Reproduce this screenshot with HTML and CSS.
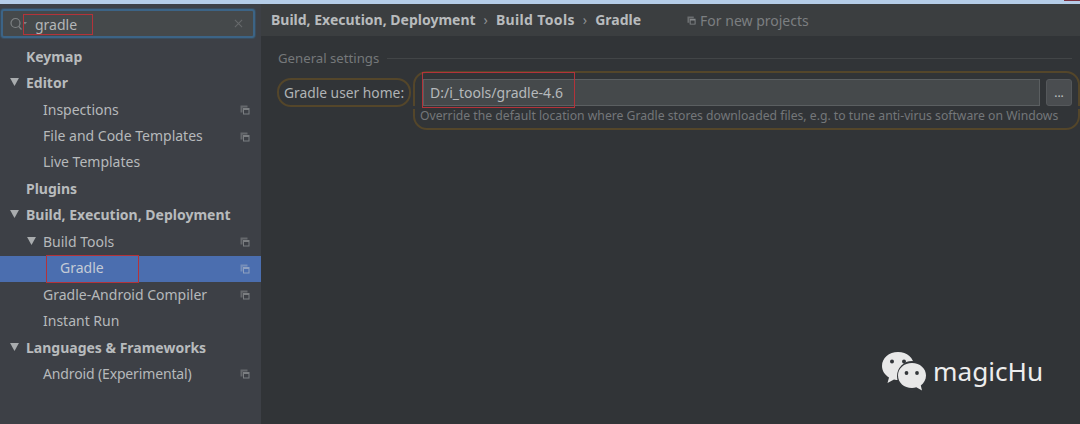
FILE: index.html
```html
<!DOCTYPE html>
<html lang="en">
<head>
<meta charset="utf-8">
<title>Settings</title>
<link rel="stylesheet" href="styles.css">
</head>
<body>
<svg class="defs" width="0" height="0" aria-hidden="true"><defs>
<symbol id="copy" viewBox="0 0 10 10"><path d="M0.5 0.5H7.5V2.5H2.5V7.5H0.5Z" fill="currentColor" opacity=".65"/><path fill-rule="evenodd" d="M3 3H9.5V9.5H3ZM4 5V8.5H8.5V5Z" fill="currentColor"/></symbol>
<symbol id="tri" viewBox="0 0 10 9"><path d="M0 0H10L5 9Z" fill="currentColor"/></symbol>
</defs></svg>
<div class="topstrip"><span class="corner"></span></div>
<div class="app">
  <aside class="sidebar">
    <div class="search">
      <svg class="search-icon" viewBox="0 0 20 14"><circle cx="6.5" cy="6" r="4.5" fill="none" stroke="currentColor" stroke-width="1.2"/><path d="M9.8 9.5L12.5 12.5" stroke="currentColor" stroke-width="1.2"/><path d="M14 5H18L16 7.5Z" fill="currentColor"/></svg>
      <span class="search-text">gradle</span>
      <svg class="search-clear" viewBox="0 0 10 10"><path d="M1 1L9 9M9 1L1 9" stroke="currentColor" stroke-width="1.2"/></svg>
    </div>
    <nav class="tree">
      <div class="row lvl0"><span class="label bold">Keymap</span></div>
      <div class="row lvl0"><svg class="tri"><use href="#tri"/></svg><span class="label bold">Editor</span></div>
      <div class="row lvl1"><span class="label">Inspections</span><svg class="copy"><use href="#copy"/></svg></div>
      <div class="row lvl1"><span class="label">File and Code Templates</span><svg class="copy"><use href="#copy"/></svg></div>
      <div class="row lvl1"><span class="label">Live Templates</span></div>
      <div class="row lvl0"><span class="label bold">Plugins</span></div>
      <div class="row lvl0"><svg class="tri"><use href="#tri"/></svg><span class="label bold">Build, Execution, Deployment</span></div>
      <div class="row lvl1"><svg class="tri"><use href="#tri"/></svg><span class="label">Build Tools</span><svg class="copy"><use href="#copy"/></svg></div>
      <div class="row lvl2 selected"><span class="label">Gradle</span><svg class="copy"><use href="#copy"/></svg><span class="mark mark-tree"></span></div>
      <div class="row lvl1"><span class="label">Gradle-Android Compiler</span><svg class="copy"><use href="#copy"/></svg></div>
      <div class="row lvl1"><span class="label">Instant Run</span></div>
      <div class="row lvl0"><svg class="tri"><use href="#tri"/></svg><span class="label bold">Languages &amp; Frameworks</span></div>
      <div class="row lvl1"><span class="label label-tight">Android (Experimental)</span><svg class="copy"><use href="#copy"/></svg></div>
    </nav>
    <span class="mark mark-search"></span>
  </aside>
  <main class="content">
    <header class="crumbs">
      <span class="crumb">Build, Execution, Deployment</span><span class="sep">›</span>
      <span class="crumb crumb-wide">Build Tools</span><span class="sep">›</span>
      <span class="crumb">Gradle</span>
      <span class="scope"><svg class="copy-small"><use href="#copy"/></svg>For new projects</span>
    </header>
    <section class="panel">
      <div class="group-title"><span>General settings</span><i class="rule"></i></div>
      <div class="form">
        <label class="field-label">Gradle user home:</label>
        <div class="field-col">
          <div class="field-line">
            <div class="input">D:/i_tools/gradle-4.6</div>
            <button class="more">...</button>
          </div>
          <div class="hint">Override the default location where Gradle stores downloaded files, e.g. to tune anti-virus software on Windows</div>
        </div>
        <span class="mark mark-input"></span>
      </div>
    </section>
    <div class="watermark">
      <svg class="wechat" viewBox="0 0 46 40">
        <path d="M17 1C8 1 1 7 1 15C1 20 4 24 8 26.500L6.500 32L13 28.500C14.500 29 16 29 17.500 29C26 29 33 22.500 33 15C33 7 26 1 17 1Z" fill="#e8e8e8"/>
        <circle cx="11" cy="10.500" r="2" fill="#33363a"/><circle cx="23" cy="10.500" r="2" fill="#33363a"/>
        <circle cx="31" cy="25" r="15" fill="#33363a"/>
        <path d="M31 12C23 12 17 17.500 17 24.500C17 31.500 23 37 31 37C32.500 37 34 36.800 35.300 36.300L41 39.500L39.800 34.500C43 32 45 28.500 45 24.500C45 17.500 39 12 31 12Z" fill="#e8e8e8"/>
        <circle cx="25.500" cy="22" r="1.900" fill="#33363a"/><circle cx="36" cy="22" r="1.900" fill="#33363a"/>
      </svg>
      <span class="wm-text">magicHu</span>
    </div>
  </main>
</div>
</body>
</html>
```
FILE: styles.css
```css
* { box-sizing: border-box; }
html, body { margin: 0; height: 424px; overflow: hidden; }
body { background: #313437; font-family: "Noto Sans", "Open Sans", sans-serif; font-size: 14px; color: #b6b9bb; display: flex; flex-direction: column; }
.defs { position: absolute; }
.topstrip { height: 4px; background: #b5cde8; flex: none; position: relative; }
.corner { position: absolute; right: 0; top: 0; width: 16px; height: 1px; background: #7a3040; }
.app { flex: 1; display: flex; min-height: 0; }

.sidebar { width: 261px; flex: none; background: #3d4046; position: relative; }
.search { height: 29px; margin: 5px 6px 0 1px; border: 2px solid #3c6486; border-radius: 3px; background: #45494b; display: flex; align-items: center; padding: 2px 10px 0 6px; box-shadow: 0 0 0 1px #3a4d5e; }
.search-icon { width: 20px; height: 14px; color: #7e8284; flex: none; margin-top: -2px; }
.search-text { margin-left: 6px; color: #b4b7b9; flex: 1; }
.search-clear { width: 9px; height: 9px; color: #66696b; flex: none; margin-top: -2px; }

.tree { margin-top: 6px; }
.row { height: 26.45px; display: flex; align-items: center; position: relative; white-space: nowrap; line-height: 20px; }
.lvl0 { padding-left: 26px; }
.lvl1 { padding-left: 43px; }
.lvl2 { padding-left: 60px; }
.label { flex: 1; margin-bottom: 1px; }
.label-tight { letter-spacing: -.14px; }
.bold { font-weight: 700; color: #b8bbbd; }
.tri { width: 9px; height: 8px; color: #a9acae; position: absolute; margin-left: -16px; margin-top: -3px; }
.copy { width: 10px; height: 10px; color: #7b7e81; flex: none; margin-right: 11px; }
.selected { background: #4b6eaf; }
.selected .label { color: #c4cbd6; }
.selected .copy { color: #8ea0c0; }

.content { flex: 1; min-width: 0; position: relative; display: flex; flex-direction: column; }
.crumbs { height: 32px; flex: none; background: #3b3e40; display: flex; align-items: center; padding: 0 0 2px 10px; white-space: nowrap; }
.crumb { font-weight: 700; color: #b8bbbd; }
.crumb-wide { letter-spacing: .35px; }
.sep { margin: 0 8px; color: #8d9093; }
.scope { margin-left: 46px; color: #7c7f81; display: flex; align-items: center; padding-top: 2px; }
.copy-small { width: 9px; height: 9px; margin-right: 4px; color: #85888a; }

.panel { padding: 11px 0 0 17px; }
.group-title { display: flex; align-items: center; height: 22px; font-size: 13.2px; color: #75787a; padding-right: 8px; }
.rule { flex: 1; height: 1px; background: #424547; margin-left: 8px; }
.form { display: flex; align-items: flex-start; position: relative; margin-top: 9px; }
.field-label { height: 29px; flex: none; line-height: 25px; padding: 0 5px; border: 2px solid #54462a; border-radius: 14px; color: #b0b3b5; width: 134px; margin: 0 2px 0 -1px; font-size: 13.8px; white-space: nowrap; }
.field-col { flex: 1; min-width: 0; margin-top: -7px; border: 2px solid #54462a; border-radius: 14px; padding: 6px 6px 0 8px; height: 59px; position: relative; }
.field-col::before, .field-col::after { content: ""; position: absolute; top: 33px; width: 4px; height: 3px; background: #313437; }
.field-col::before { left: -3px; }
.field-col::after { right: -3px; }
.field-line { display: flex; height: 27px; }
.input { flex: 1; background: #45494b; border: 1px solid #5b5f61; padding-left: 6px; line-height: 25px; color: #b6b9bb; margin-right: 6px; }
.more { width: 26px; height: 27px; background: #4a4d50; border: 1px solid #55585b; border-radius: 3px; color: #c0c3c5; font: 12px/20px "Noto Sans", sans-serif; padding: 0; }
.hint { font-size: 12.2px; color: #74777a; line-height: 18px; margin: 1px 0 0 -3px; white-space: nowrap; }

.mark { position: absolute; border: 1px solid #b3333a; pointer-events: none; }
.mark-search { left: 23px; top: 10px; width: 70px; height: 21px; }
.mark-tree { left: 46px; top: -1px; width: 93px; height: 28px; }
.mark-input { left: 144px; top: -6px; width: 153px; height: 36px; }

.watermark { position: absolute; left: 620px; top: 347px; display: flex; align-items: center; gap: 6px; }
.wechat { width: 46px; height: 40px; }
.wm-text { font-size: 26.2px; color: #ededed; line-height: 40px; }
```
